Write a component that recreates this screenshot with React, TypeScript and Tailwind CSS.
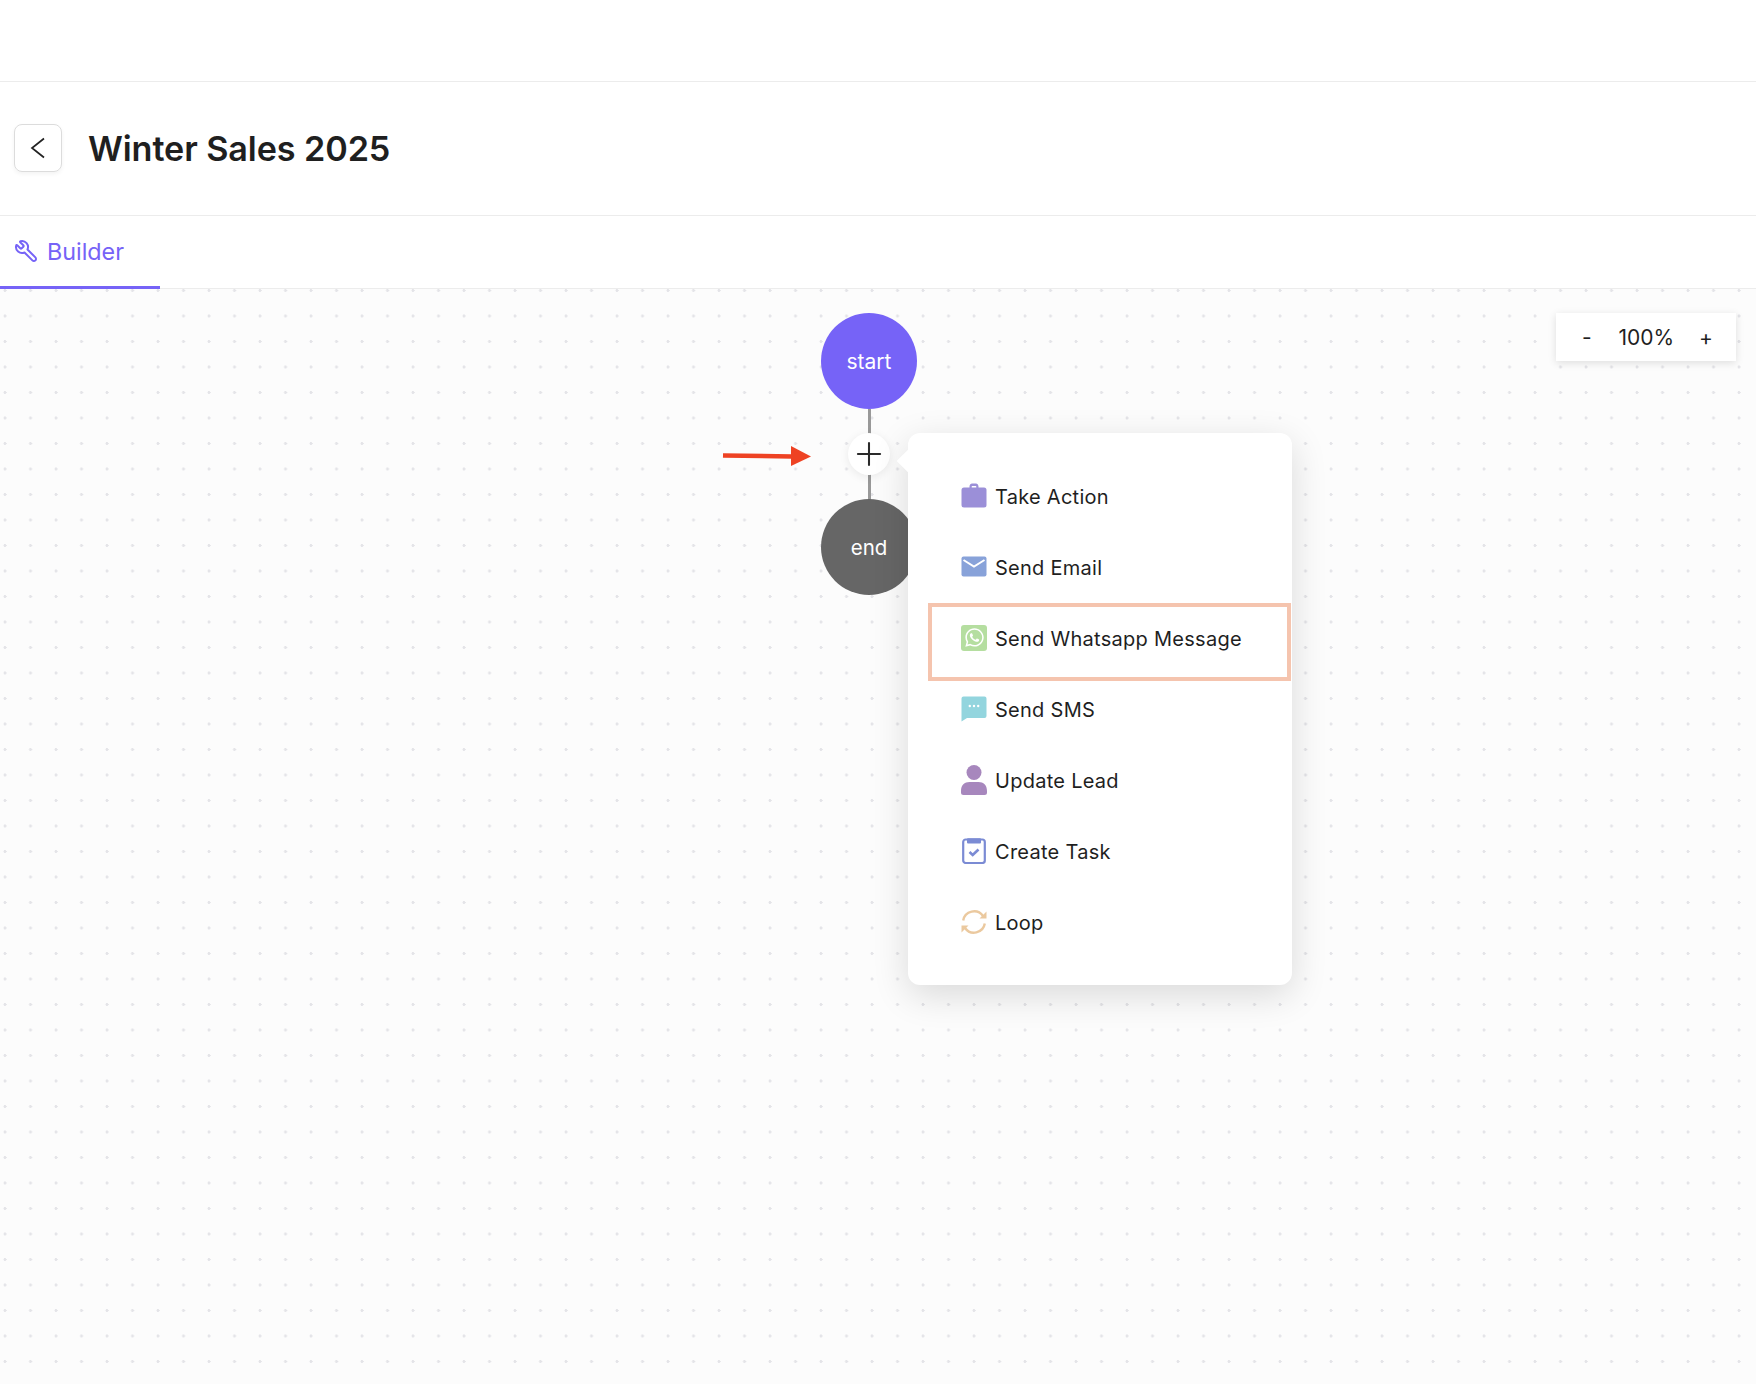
import React from "react";
import { Plus, Wrench } from "lucide-react";
import { FaWhatsapp } from "react-icons/fa";

const Briefcase = () => (
  <svg width="26" height="26" viewBox="0 0 26 26">
    <path d="M8.500 5V3.600C8.500 1.600 9.900.5 11 .5h4c1.100 0 2.500 1.100 2.500 3.100V5h-2.200V3.500c0-.4-.2-.6-.5-.6h-3.600c-.3 0-.5.2-.5.6V5z" fill="#9b8fd8" />
    <rect x="0.500" y="4.500" width="25" height="20" rx="2.500" fill="#9b8fd8" />
  </svg>
);
const Mail = () => (
  <svg width="26" height="26" viewBox="0 0 26 26">
    <rect x="0.500" y="2.500" width="25" height="20" rx="2" fill="#88a2d9" />
    <path d="M2.500 6 13 12.500 23.500 6" fill="none" stroke="#fff" strokeWidth="2" />
  </svg>
);
const Whatsapp = () => (
  <span className="flex h-[26px] w-[26px] items-center justify-center rounded-[3px] bg-[#b5dea0] text-white">
    <FaWhatsapp size={21} />
  </span>
);
const Sms = () => (
  <svg width="26" height="26" viewBox="0 0 26 26">
    <path d="M2.500 .5h21a2 2 0 0 1 2 2v17.500a2 2 0 0 1-2 2H6L.5 25.500V2.500a2 2 0 0 1 2-2z" fill="#93d5de" />
    <circle cx="8.800" cy="10" r="1.200" fill="#fff" />
    <circle cx="13" cy="10" r="1.200" fill="#fff" />
    <circle cx="17.200" cy="10" r="1.200" fill="#fff" />
  </svg>
);
const User = () => (
  <svg width="26" height="30" viewBox="0 0 26 30">
    <circle cx="13" cy="7.500" r="7.500" fill="#a787bd" />
    <path d="M0 26c0-6 3.500-9 8.500-9h9c5 0 8.500 3 8.500 9v1.500A2.500 2.500 0 0 1 23.500 30h-21A2.500 2.500 0 0 1 0 27.500z" fill="#a787bd" />
  </svg>
);
const Task = () => (
  <svg width="26" height="26" viewBox="0 0 26 26">
    <rect x="2.200" y="1.500" width="21.600" height="23.500" rx="2.500" fill="none" stroke="#7b8bd4" strokeWidth="2.200" />
    <rect x="6" y="0.200" width="14" height="5.300" rx="1" fill="#7b8bd4" />
    <path d="m8.500 14 3.200 3 5.800-5.500" fill="none" stroke="#7b8bd4" strokeWidth="2.600" />
  </svg>
);
const Loop = () => (
  <svg width="26" height="26" viewBox="0 0 26 26" fill="none" stroke="#ebc99f" strokeWidth="2.400">
    <path d="M2.200 11.500A11 11 0 0 1 22 7" />
    <path d="M23.800 14.500A11 11 0 0 1 4 19" />
    <path d="M25.500 2.500V9.500H18.500z" fill="#ebc99f" stroke="none" />
    <path d="M.5 23.500V16.500H7.500z" fill="#ebc99f" stroke="none" />
  </svg>
);

const items = [
  { label: "Take Action", icon: <Briefcase /> },
  { label: "Send Email", icon: <Mail /> },
  { label: "Send Whatsapp Message", icon: <Whatsapp /> },
  { label: "Send SMS", icon: <Sms /> },
  { label: "Update Lead", icon: <User /> },
  { label: "Create Task", icon: <Task /> },
  { label: "Loop", icon: <Loop /> },
];

export default function App() {
  return (
    <div className="flex h-[1384px] w-[1756px] flex-col overflow-hidden bg-white font-['Inter',sans-serif] text-[#1f1f1f]">
      <div className="h-[82px] shrink-0 border-b border-[#ececec]" />
      <div className="flex h-[134px] shrink-0 items-center gap-[26px] border-b border-[#ececec] pl-[14px]">
        <button className="flex h-[48px] w-[48px] -translate-y-px items-center justify-center rounded-[8px] border border-[#dcdcdc] shadow-[0_2px_4px_rgba(0,0,0,0.05)]">
          <svg width="16" height="22" viewBox="0 0 16 22" fill="none" stroke="#222" strokeWidth="1.700">
            <path d="M14 1.500 2 11l12 9.500" />
          </svg>
        </button>
        <h1 className="pt-[2px] text-[34.200px] leading-none font-semibold tracking-[-0.1px]">Winter Sales 2025</h1>
      </div>
      <div className="flex h-[73px] shrink-0 items-stretch border-b border-[#ececec]">
        <div className="-mb-px flex w-[160px] items-center gap-[9px] border-b-[3px] border-[#7663f7] pl-[14px] text-[23.300px] text-[#7663f7]">
          <Wrench size={24} strokeWidth={2} className="-scale-x-100" />
          <span className="pt-[3px]">Builder</span>
        </div>
      </div>

      <div className="relative flex-1 bg-[#fcfcfc] bg-[radial-gradient(circle_at_5px_1.500px,#e4e4e8_1.400px,transparent_1.700px)] bg-[length:25.500px_25.500px]">
        <div className="absolute top-[24px] right-[20px] flex h-[48px] w-[180px] items-center justify-between bg-white pt-[2px] pr-[23px] pl-[26px] text-[21px] shadow-[0_2px_8px_rgba(0,0,0,0.12)]">
          <span>-</span>
          <span className="pl-[2px]">100%</span>
          <span>+</span>
        </div>

        <div className="absolute top-[24px] left-[821px] flex h-[96px] w-[96px] items-center justify-center rounded-full bg-[#7663f7] pt-[2px] text-[21px] text-white">
          start
        </div>
        <div className="absolute top-[120px] left-[867.500px] h-[140px] w-[3px] bg-[#999]" />
        <div className="absolute top-[210px] left-[821px] flex h-[96px] w-[96px] items-center justify-center rounded-full bg-[#666] pt-[2px] text-[20.500px] text-white">
          end
        </div>
        <div className="absolute top-[144px] left-[848px] flex h-[42px] w-[42px] items-center justify-center rounded-full bg-white shadow-[0_2px_10px_rgba(0,0,0,0.08)]">
          <Plus size={38} strokeWidth={1.300} className="text-[#2a2a2a]" />
        </div>
        <svg className="absolute top-[155px] left-[722px]" width="90" height="24" viewBox="0 0 90 24">
          <path d="M1 11.500 L70 12.500" stroke="#ee4223" strokeWidth="4.500" />
          <path d="M69 2 L89 12.500 L69 22z" fill="#ee4223" />
        </svg>

        <div className="absolute top-[144px] left-[908px] h-[552px] w-[384px] rounded-[12px] bg-white pt-[27px] shadow-[0_10px_36px_rgba(0,0,0,0.14)]">
          <div className="absolute top-[20px] left-[-8px] h-[16px] w-[16px] rotate-45 bg-white" />
          <ul className="relative">
            {items.map((item) => (
              <li key={item.label} className="flex h-[71px] items-center gap-[8px] pl-[53px] text-[20px] tracking-[0.27px]">
                <span className="flex h-[30px] w-[26px] items-center justify-center">{item.icon}</span>
                <span className="pt-[2px]">{item.label}</span>
              </li>
            ))}
          </ul>
          <div className="absolute top-[170px] right-[1px] left-[20px] h-[78px] border-4 border-[#f5c4ae]" />
        </div>
      </div>
    </div>
  );
}
